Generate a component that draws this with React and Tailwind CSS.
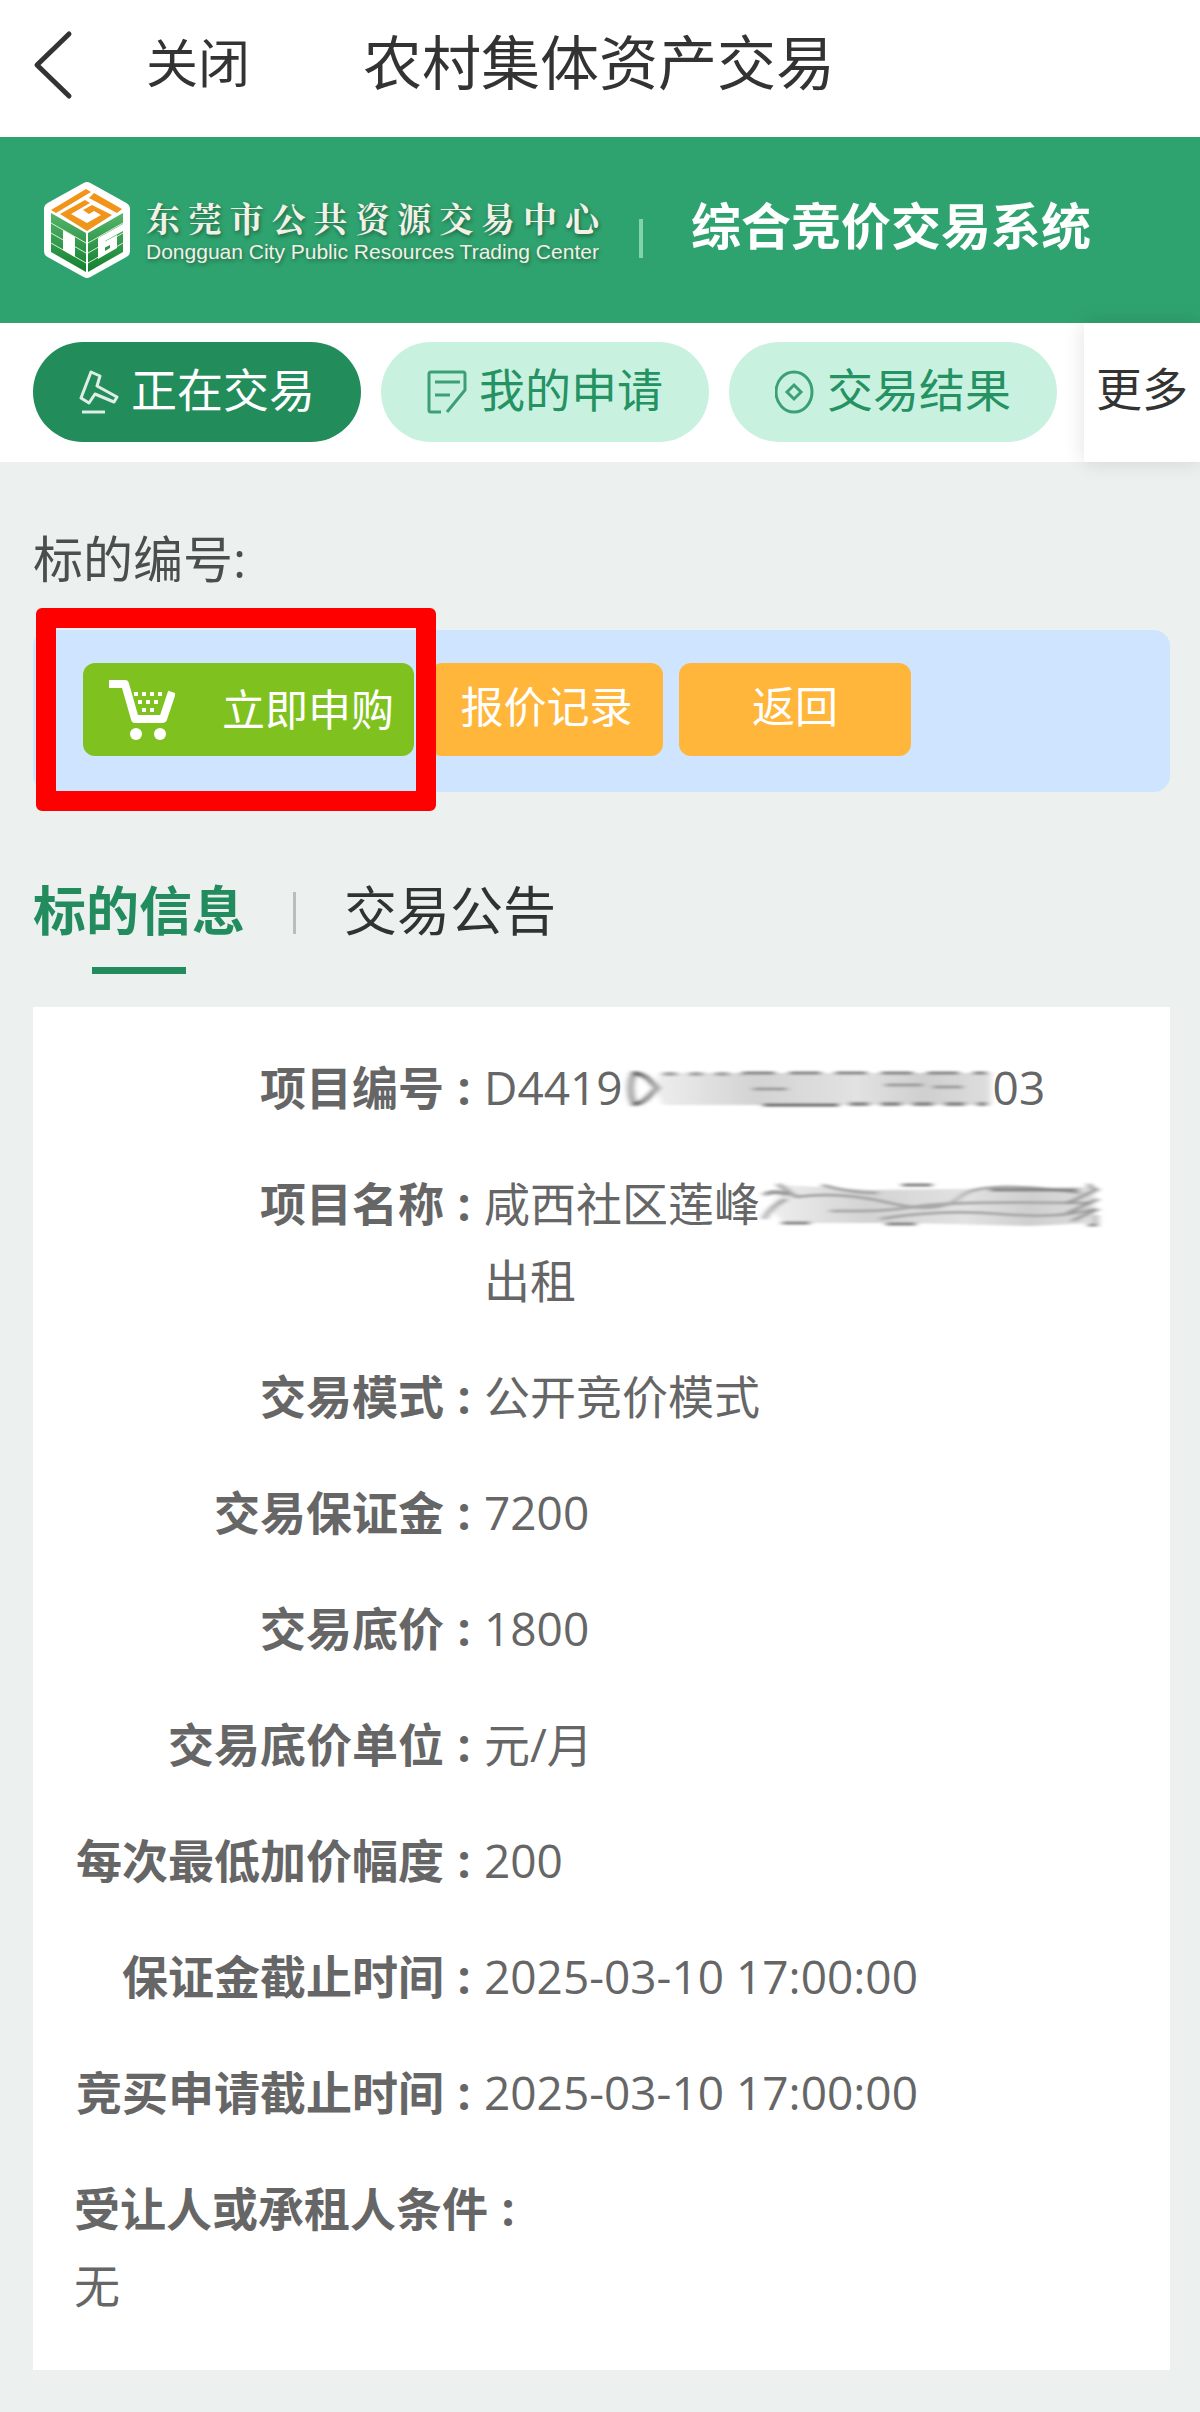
import React, { useState } from 'react';
import clsx from 'clsx';

const font = "font-['Open_Sans','Noto_Sans_CJK_SC',sans-serif]";

function BackIcon() {
  return (
    <svg viewBox="0 0 40 70" className="h-[70px] w-10" fill="none" stroke="#333" strokeWidth="5" strokeLinecap="round" strokeLinejoin="round">
      <path d="M36 4 4 35 36 66" />
    </svg>
  );
}

function LogoMark() {
  return (
    <svg viewBox="0 0 86 98" className="h-[98px] w-[86px] shrink-0">
      <defs>
        <linearGradient id="leaf" x1="0" y1="0" x2="0" y2="1">
          <stop offset="0" stopColor="#57b56b" />
          <stop offset="1" stopColor="#128030" />
        </linearGradient>
      </defs>
      <path d="M43 8 79 28V70L43 90 7 70V28Z" fill="#fff" stroke="#fff" strokeWidth="14" strokeLinejoin="round" />
      {/* side faces */}
      <path d="M7 32 42 52V91L7 71Z" fill="url(#leaf)" />
      <path d="M44 52 79 32V71L44 91Z" fill="url(#leaf)" />
      <path d="M7 42 42 62M7 52 42 72M7 62 42 82M79 42 44 62M79 52 44 72M79 62 44 82" stroke="#d9f0d6" strokeWidth="1" />
      <path d="M19 49 31 56V76L19 69Z" fill="#fff" />
      <path d="M54 57 79 43V50L61 60V70L66 67V64L60 67V61L73 54V67L54 78Z" fill="#fff" />
      {/* top face */}
      <path d="M43 9 78 29 43 49 8 29Z" fill="#fff" />
      <path d="M42 8 47 11 12 32 7 29ZM50 12 78 28 73 32 45 17ZM41 19 46 22 27 33 43 42 57 34 50 30 45 33 39 29 48 24 68 34 43 50 16 33Z" fill="#f0941a" />
    </svg>
  );
}

function GavelIcon() {
  return (
    <svg viewBox="0 0 40 44" className="h-11 w-10" fill="none" stroke="currentColor" strokeWidth="3" strokeLinejoin="round" opacity="0.85">
      <path d="M12 2 21 6 18 16 38 27 35 32 16 24 10 33 2 28Z" />
      <path d="M3 42H26" />
    </svg>
  );
}

function FormIcon() {
  return (
    <svg viewBox="0 0 40 44" className="h-11 w-10" fill="none" stroke="currentColor" strokeWidth="3" strokeLinejoin="round" opacity="0.85">
      <path d="M14 42H4Q2 42 2 40V4Q2 2 4 2H36Q38 2 38 4V20L20 42" />
      <path d="M8 12H33M8 25H23" />
    </svg>
  );
}

function ResultIcon() {
  return (
    <svg viewBox="0 0 40 44" className="h-11 w-10" fill="none" stroke="currentColor" strokeWidth="3" opacity="0.85">
      <ellipse cx="19" cy="22" rx="18" ry="20" />
      <path d="M19 15 26 22 19 29 12 22Z" />
    </svg>
  );
}

function CartIcon() {
  return (
    <svg viewBox="0 0 66 60" className="h-[60px] w-[66px]" fill="none" stroke="currentColor">
      <path d="M0 4H16L26 39H54L63 12" strokeWidth="8" strokeLinejoin="round" />
      <path d="M25 14H54M29 22H50M33 30H46" strokeWidth="4" strokeDasharray="4 4" />
      <circle cx="27" cy="54" r="6" fill="currentColor" stroke="none" />
      <circle cx="51" cy="54" r="6" fill="currentColor" stroke="none" />
    </svg>
  );
}

// Hidden part of the project number
function NumberMask() {
  return (
    <svg viewBox="0 0 370 42" className="mb-2 inline-block h-[42px] w-[370px] overflow-visible align-middle" fill="none">
      <defs>
        <filter id="soft" x="-5%" y="-20%" width="110%" height="140%">
          <feGaussianBlur stdDeviation="3 1" />
        </filter>
        <linearGradient id="smear">
          <stop offset="0" stopColor="#eee" />
          <stop offset="0.3" stopColor="#d3d3d3" />
          <stop offset="0.6" stopColor="#e2e2e2" />
          <stop offset="0.8" stopColor="#cfcfcf" />
          <stop offset="1" stopColor="#dedede" />
        </linearGradient>
      </defs>
      <g filter="url(#soft)">
        <path d="M36 5H368V37H40L32 22Z" fill="url(#smear)" />
        <path d="M11 5Q4 20 11 36Q18 38 34 20Q22 5 11 5Z" stroke="#666" strokeWidth="4" />
        <path d="M40 6H120" stroke="#a5a5a5" strokeWidth="4" strokeDasharray="14 12" />
        <path d="M120 5H364" stroke="#808080" strokeWidth="3" strokeDasharray="32 14" />
        <path d="M140 37H216" stroke="#666" strokeWidth="3" />
        <path d="M226 36H364" stroke="#888" strokeWidth="4" strokeDasharray="20 12" />
        <path d="M130 21H164M262 17H300M310 19H340" stroke="#999" strokeWidth="3" />
      </g>
    </svg>
  );
}

// Hidden part of the project name
function NameMask() {
  return (
    <svg viewBox="0 0 340 48" className="mb-2 inline-block h-12 w-[340px] overflow-visible align-middle" fill="none">
      <g filter="url(#soft)">
        <path d="M20 4 60 6 110 9 334 6V42L270 45 150 42 24 42 12 30Z" fill="url(#smear)" />
        <path d="M4 14Q14 8 28 14M4 38Q10 26 26 18M18 3 36 16" stroke="#999" strokeWidth="4" />
        <path d="M62 4Q90 12 118 12M36 16Q80 10 130 22T200 16T320 12" stroke="#a5a5a5" strokeWidth="3" />
        <path d="M70 30H100Q130 30 160 25T330 22M120 38Q180 28 240 33T334 28" stroke="#a8a8a8" strokeWidth="3" />
        <path d="M142 4H172M22 42H50M126 43H156M230 9H318" stroke="#808080" strokeWidth="3" />
        <path d="M308 22 338 8M308 32 338 18M312 40 338 28M328 44H336V34M328 3 336 10" stroke="#888" strokeWidth="3" />
      </g>
    </svg>
  );
}

const navItems = [
  { label: '正在交易', icon: GavelIcon },
  { label: '我的申请', icon: FormIcon },
  { label: '交易结果', icon: ResultIcon },
];

const details = [
  { label: '项目编号', value: <>D4419<NumberMask />03</> },
  { label: '项目名称', value: <>咸西社区莲峰<NameMask />出租</> },
  { label: '交易模式', value: '公开竞价模式' },
  { label: '交易保证金', value: '7200' },
  { label: '交易底价', value: '1800' },
  { label: '交易底价单位', value: '元/月' },
  { label: '每次最低加价幅度', value: '200' },
  { label: '保证金截止时间', value: '2025-03-10 17:00:00' },
  { label: '竞买申请截止时间', value: '2025-03-10 17:00:00' },
];

function Label({ children }) {
  return (
    <dt className="flex shrink-0 font-bold">
      {children}
      <span className="w-10 text-center">:</span>
    </dt>
  );
}

export default function App() {
  const [nav, setNav] = useState('正在交易');
  const [tab, setTab] = useState('标的信息');

  return (
    <div className={clsx(font, 'min-h-screen bg-[#ecf1ef] pb-[42px]')}>
      {/* Title bar */}
      <header className="flex h-[137px] items-center bg-white pb-2 pl-[33px] text-[#333]">
        <button aria-label="返回上一页">
          <BackIcon />
        </button>
        <button className="ml-[73px] pb-1 text-[52px] leading-none">关闭</button>
        <h1 className="ml-[113px] pb-1 text-[59px] leading-none">农村集体资产交易</h1>
      </header>

      {/* Banner */}
      <div className="flex h-[186px] items-center bg-[#2fa36f] pl-[44px] text-white">
        <LogoMark />
        <div className="ml-4 pt-1 text-[#f3f0e6] text-shadow-[1px_2px_4px_#0006]">
          <p className="font-['Noto_Serif_CJK_SC','Noto_Sans_CJK_SC',serif] text-[34px] leading-10 font-bold [text-align-last:justify]">东莞市公共资源交易中心</p>
          <p className="font-['Liberation_Sans',sans-serif] text-[21px] leading-7">Dongguan City Public Resources Trading Center</p>
        </div>
        <span className="ml-10 mt-4 h-[39px] w-1 bg-[#82d3ab]"></span>
        <h2 className="ml-12 pb-2 text-[50px] leading-none font-bold">综合竞价交易系统</h2>
      </div>

      {/* Main navigation */}
      <nav className="flex h-[139px] bg-white">
        <div className="flex min-w-0 flex-1 gap-5 pt-[19px] pl-[33px]">
          {navItems.map(({ label, icon: Icon }) => (
            <button
              key={label}
              onClick={() => setNav(label)}
              className={clsx(
                'flex h-[100px] w-[328px] shrink-0 items-center justify-center gap-3 rounded-full text-[46px] leading-none',
                nav === label ? 'bg-[#228c5a] text-white' : 'bg-[#c8f1e0] text-[#259263]'
              )}
            >
              <Icon />
              <span className="pb-1.5">{label}</span>
            </button>
          ))}
        </div>
        <button className="w-[116px] shrink-0 bg-white pb-2.5 text-[46px] leading-none text-[#333] shadow-[0_0_20px_#0000001f]">更多</button>
      </nav>

      <main className="px-[33px] pr-[30px]">
        <p className="pt-[60px] text-[50px] leading-[75px] text-[#4a4f4d]">标的编号:</p>

        {/* Actions */}
        <div className="relative mt-[33px] flex gap-4 rounded-2xl bg-[#cfe5ff] px-[50px] pt-[33px] pb-9 text-[43px] leading-none text-white">
          <button className="flex h-[93px] w-[331px] items-center rounded-xl bg-[#7fc21f] pl-[26px]">
            <CartIcon />
            <span className="ml-[47px]">立即申购</span>
          </button>
          <button className="h-[93px] w-[233px] rounded-xl bg-[#ffb63b] pb-1.5">报价记录</button>
          <button className="h-[93px] w-[232px] rounded-xl bg-[#ffb63b] pb-1.5">返回</button>
          <div className="pointer-events-none absolute -top-[22px] left-[3px] h-[203px] w-[400px] rounded-md border-20 border-[#f00]"></div>
        </div>

        {/* Tabs */}
        <div className="mt-[79px] flex items-start text-[53px] leading-[80px]">
          {['标的信息', '交易公告'].map((name, i) => (
            <React.Fragment key={name}>
              {i > 0 && <span className="mx-12 mt-[21px] h-[42px] w-[3px] bg-[#b9bdbb]"></span>}
              <button
                onClick={() => setTab(name)}
                className={clsx('flex flex-col items-center', tab === name ? 'font-bold text-[#228c5f]' : 'text-[#2f3332]')}
              >
                {name}
                {tab === name && <span className="mt-4 h-[7px] w-[94px] bg-[#228c5f]"></span>}
              </button>
            </React.Fragment>
          ))}
        </div>

        {/* Details */}
        <dl className="mt-[33px] flex flex-col gap-[39px] bg-white px-[41px] pt-[42px] pb-[46px] text-[46px] leading-[77px] text-[#666]">
          {details.map(({ label, value }) => (
            <div key={label} className="flex">
              <div className="flex w-[410px] shrink-0 justify-end">
                <Label>{label}</Label>
              </div>
              <dd className="min-w-0 flex-1">{value}</dd>
            </div>
          ))}
          <div>
            <Label>受让人或承租人条件</Label>
            <dd>无</dd>
          </div>
        </dl>
      </main>
    </div>
  );
}
